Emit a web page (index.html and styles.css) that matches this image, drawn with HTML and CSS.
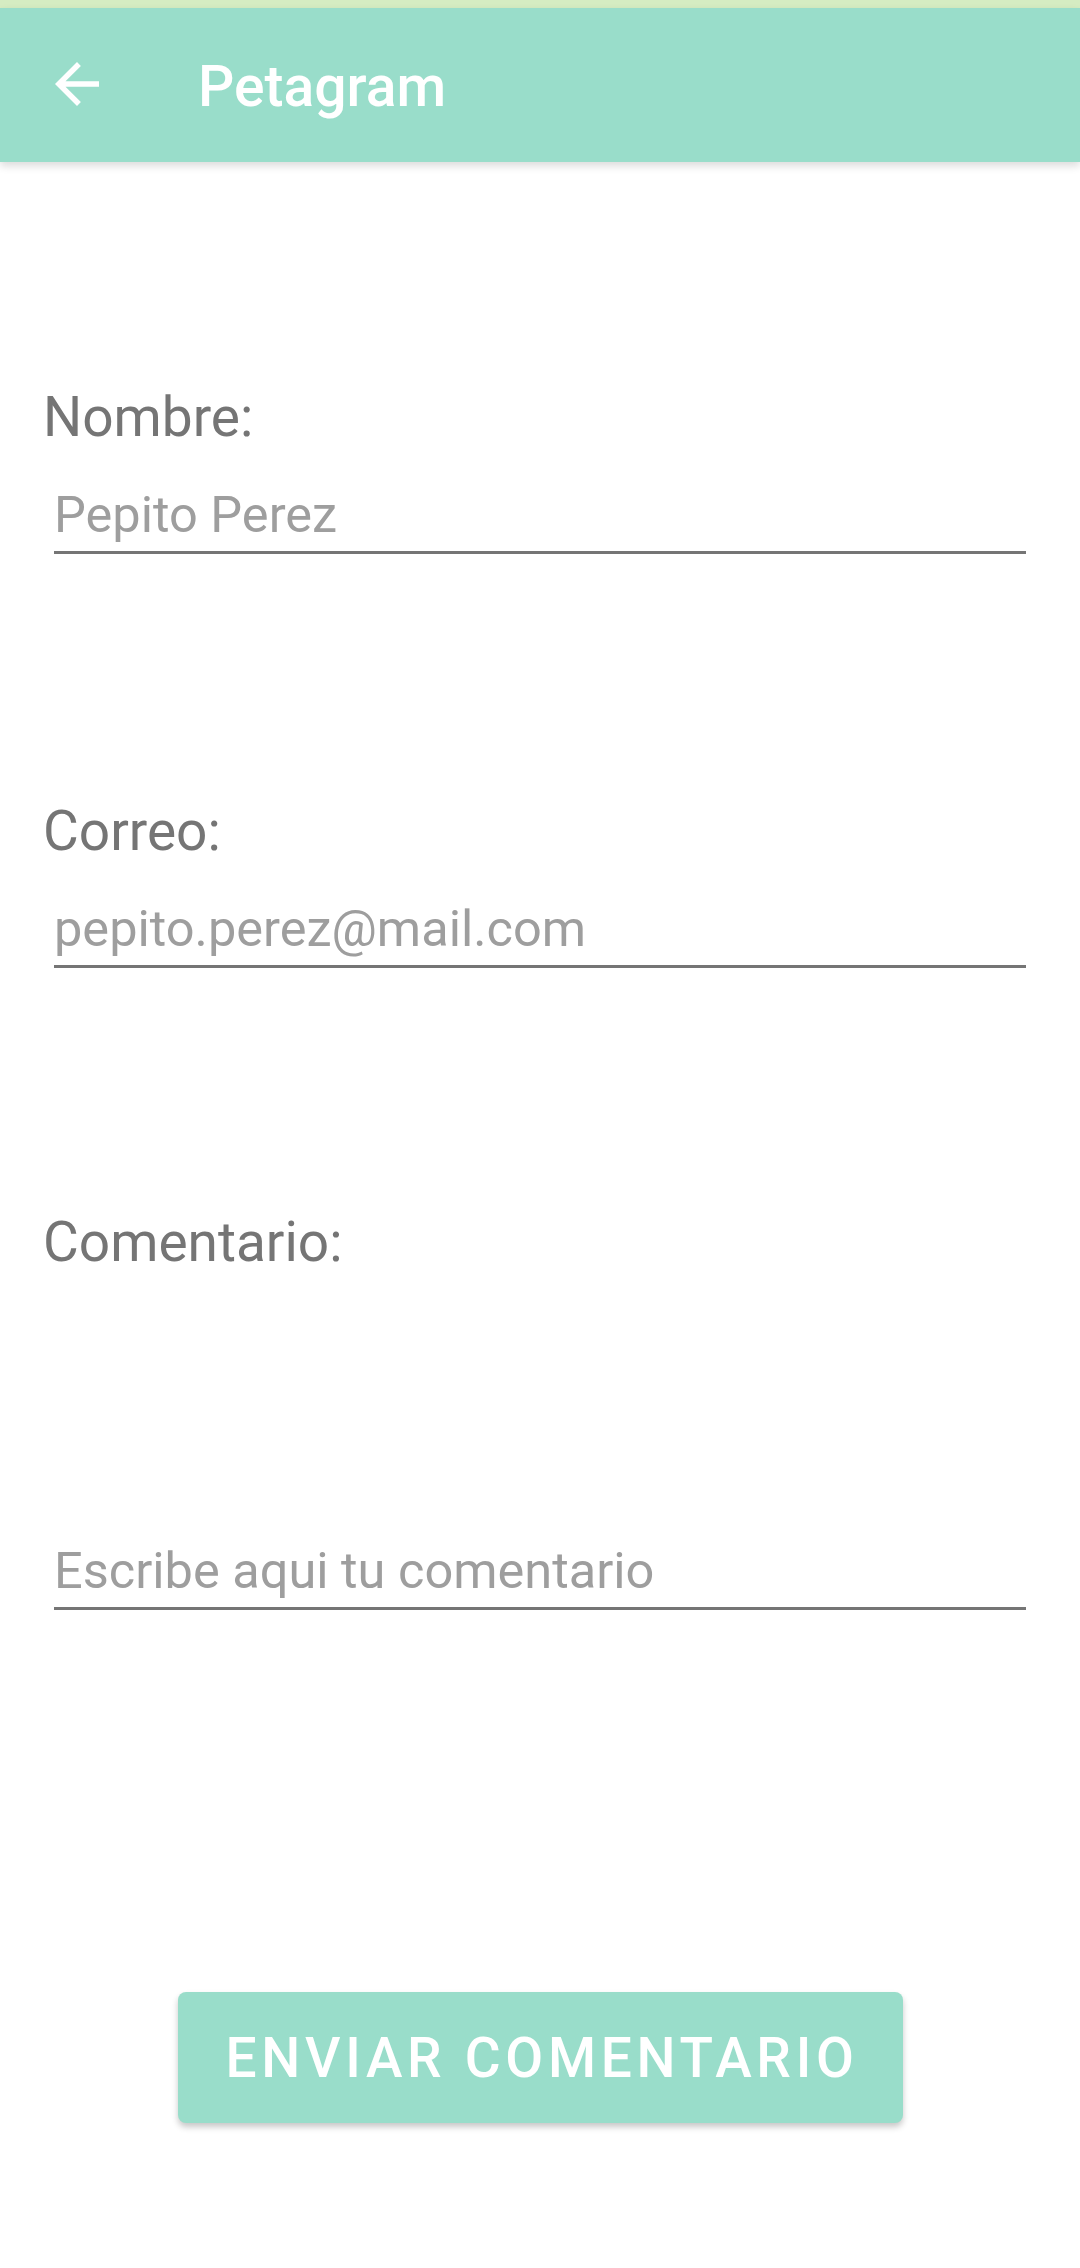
FILE: index.html
```html
<!DOCTYPE html>
<html lang="es">
<head>
<meta charset="utf-8">
<title>Petagram</title>
<link rel="stylesheet" href="styles.css">
</head>
<body>
<div class="status"></div>
<header class="appbar">
  <button class="nav" aria-label="Atrás">
    <svg width="44" height="44" viewBox="0 0 16 16"><path d="M16 7H3.83l5.59-5.59L8 0 0 8l8 8 1.41-1.41L3.83 9H16z" fill="#fff"/></svg>
  </button>
  <h1 class="title">Petagram</h1>
</header>
<main class="form">
  <section class="field field-first">
    <label class="label" for="nombre">Nombre:</label>
    <input class="input" id="nombre" type="text" placeholder="Pepito Perez">
  </section>
  <section class="field">
    <label class="label" for="correo">Correo:</label>
    <input class="input" id="correo" type="email" placeholder="pepito.perez@mail.com">
  </section>
  <section class="field field-comment">
    <label class="label" for="comentario">Comentario:</label>
    <input class="input input-comment" id="comentario" type="text" placeholder="Escribe aqui tu comentario">
  </section>
  <div class="actions">
    <button class="send">ENVIAR COMENTARIO</button>
  </div>
</main>
</body>
</html>
```
FILE: styles.css
```css
html, body {
  margin: 0;
  padding: 0;
  background: #ffffff;
  font-family: Roboto, "Noto Sans", "Liberation Sans", sans-serif;
}
body {
  width: 1080px;
  height: 2268px;
  overflow: hidden;
}
.status {
  height: 8px;
  background: #d5ecc2;
}
.appbar {
  position: relative;
  height: 154px;
  background: #99ddca;
  display: flex;
  align-items: center;
  box-shadow: 0 4px 8px rgba(0, 0, 0, 0.14);
  z-index: 1;
}
.nav {
  width: 66px;
  height: 66px;
  margin-left: 44px;
  margin-top: -2px;
  padding: 0;
  border: none;
  background: transparent;
  display: flex;
  align-items: center;
  justify-content: center;
}
.title {
  margin: 4px 0 0 88px;
  color: #ffffff;
  font-size: 57px;
  font-weight: 500;
  line-height: 64px;
}
.form {
  display: flex;
  flex-direction: column;
  padding: 223px 54px 0 43px;
}
.field {
  display: flex;
  flex-direction: column;
  margin-top: 245px;
}
.field-first {
  margin-top: 0;
}
.field-comment {
  margin-top: 242px;
}
.label {
  font-size: 55px;
  line-height: 64px;
  color: #757575;
}
.input {
  margin: 37px 0 0 11px;
  height: 58px;
  padding: 0 0 7px 0;
  border: none;
  border-bottom: 3px solid #757575;
  font-family: inherit;
  font-size: 50.5px;
  line-height: 58px;
  color: #333;
  background: transparent;
  outline: none;
}
.input::placeholder {
  color: #9e9e9e;
}
.input-comment {
  margin-top: 268px;
}
.actions {
  display: flex;
  justify-content: center;
  margin-top: 382px;
  padding-left: 11px;
}
.send {
  width: 725px;
  height: 131px;
  border: none;
  border-radius: 8px;
  background: #99ddca;
  color: #ffffff;
  font-family: inherit;
  font-size: 55px;
  font-weight: 500;
  letter-spacing: 4.7px;
  padding: 0 0 0 4px;
  box-shadow: 0 4px 6px rgba(0, 0, 0, 0.22);
}
```
